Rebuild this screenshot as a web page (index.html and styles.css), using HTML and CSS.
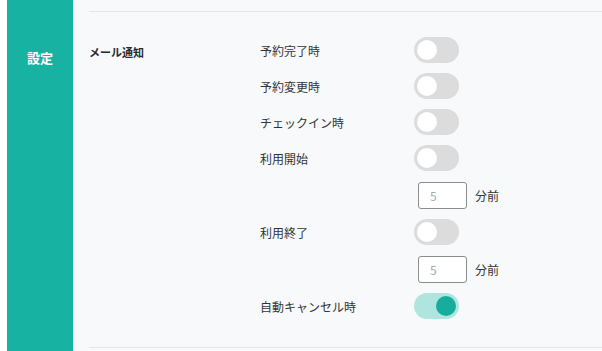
FILE: index.html
```html
<!DOCTYPE html>
<html lang="ja">
<head>
<meta charset="utf-8">
<title>設定</title>
<link rel="stylesheet" href="styles.css">
</head>
<body>
<div class="page">
  <aside class="side"><span class="side-title">設定</span></aside>
  <main class="main">
    <section class="section">
      <div class="label">メール通知</div>
      <div class="items">
        <div class="row"><span class="name">予約完了時</span><span class="switch"></span></div>
        <div class="row"><span class="name">予約変更時</span><span class="switch"></span></div>
        <div class="row"><span class="name">チェックイン時</span><span class="switch"></span></div>
        <div class="row"><span class="name">利用開始</span><span class="switch"></span></div>
        <div class="row sub"><span class="name"></span><input class="num" type="text" placeholder="5"><span class="unit">分前</span></div>
        <div class="row"><span class="name">利用終了</span><span class="switch"></span></div>
        <div class="row sub"><span class="name"></span><input class="num" type="text" placeholder="5"><span class="unit">分前</span></div>
        <div class="row"><span class="name">自動キャンセル時</span><span class="switch on"></span></div>
      </div>
    </section>
  </main>
</div>
</body>
</html>
```
FILE: styles.css
```css
* { box-sizing: border-box; }
html, body { margin: 0; padding: 0; }
body {
  font-family: "Noto Sans CJK JP", "Noto Sans", sans-serif;
  font-size: 12px;
  color: #333;
  background: #fff;
}
.page {
  display: flex;
  height: 351px;
  padding-left: 7px;
  background: #fff;
  overflow: hidden;
}
.side {
  width: 66px;
  flex: none;
  background: #18b2a2;
  padding-top: 49px;
  text-align: center;
}
.side-title {
  display: block;
  color: #fff;
  font-size: 13px;
  font-weight: bold;
  line-height: 18px;
}
.main {
  flex: 1;
  background: #f8f9fb;
  padding: 11px 0 0 16px;
}
.section {
  display: flex;
  border-top: 1px solid #e3e5e8;
  border-bottom: 1px solid #e3e5e8;
  padding: 25px 0 28px;
}
.label {
  width: 171px;
  flex: none;
  padding-top: 2px;
  line-height: 26px;
  font-size: 11px;
  font-weight: bold;
  color: #2a2a2a;
}
.items {
  display: flex;
  flex-direction: column;
  gap: 10px;
}
.row {
  display: flex;
  align-items: center;
  height: 26px;
}
.row.sub {
  height: 27px;
  margin-top: 1px;
}
.name {
  width: 154px;
  flex: none;
}
.switch {
  position: relative;
  width: 45px;
  height: 26px;
  border-radius: 13px;
  background: #dcdcdd;
}
.switch::after {
  content: "";
  position: absolute;
  left: 3px;
  top: 3px;
  width: 20px;
  height: 20px;
  border-radius: 50%;
  background: #fff;
}
.switch.on { background: #b0e4de; }
.switch.on::after {
  left: 22px;
  background: #17ad9d;
}
.num {
  margin: 0 0 0 4px;
  width: 49px;
  height: 27px;
  border: 1px solid #8c8c8c;
  border-radius: 3px;
  background: #fff;
  padding: 0 0 0 11px;
  font-family: inherit;
  font-size: 12px;
  color: #333;
  outline: none;
}
.num::placeholder { color: #aaa; }
.unit {
  margin-left: 8px;
}
```
